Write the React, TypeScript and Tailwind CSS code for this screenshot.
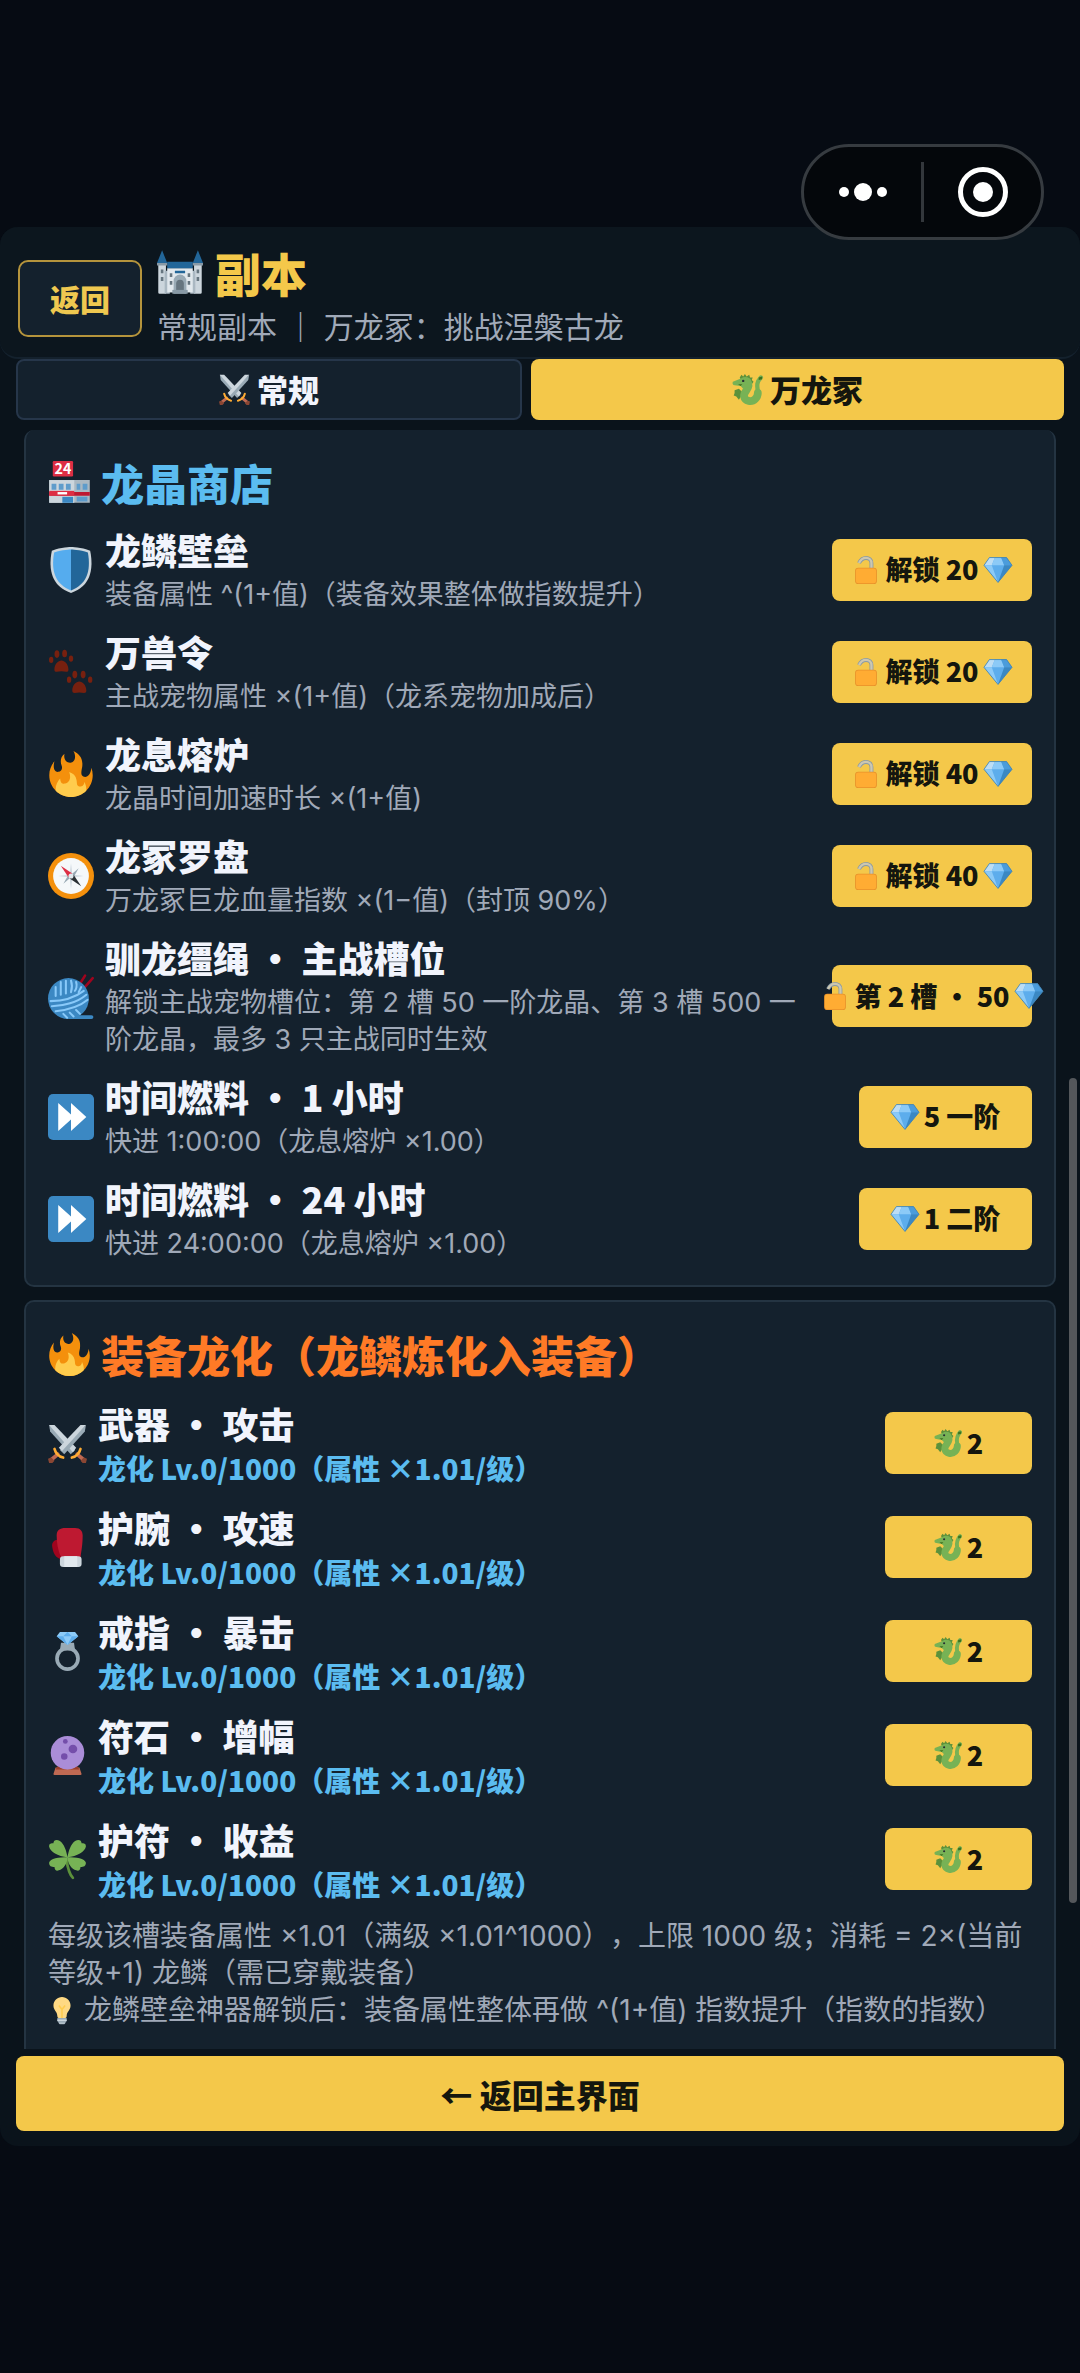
import type { ReactNode } from 'react';

/**
 * Dungeon screen, "万龙冢" tab: crystal shop on top, gear dragonization below.
 * To add a shop entry put it in SHOP_ITEMS; gear slots live in GEAR_SLOTS.
 */

const FONT = "font-['Noto_Sans_CJK_SC',sans-serif]";
// muted descriptions take their digits and signs from Inter
const MUTED = "font-['Inter','Noto_Sans_CJK_SC',sans-serif] text-[#a0a9b8]";

/* ---------- icons ---------- */

const ICONS = {
  castle: (
    <>
      <path fill="#CCD6DD" d="M1 12h6v23H2a1 1 0 0 1-1-1zM29 12h6v22a1 1 0 0 1-1 1h-5z" />
      <path fill="#AAB8C2" d="M6 17h4v18H6zM26 17h4v18h-4z" />
      <path fill="#E1E8ED" d="M8 15h20v19H8z" />
      <path fill="#269" d="M4 1L0 11h8zM32 1l-4 10h8zM8 10h20v5H8zM14 17h8v2h-8z" />
      <path fill="#8899A6" d="M0 11h8v2H0zM28 11h8v2h-8z" />
      <path fill="#66757F" d="M3 16h2v3H3zM3 22h2v3H3zM31 16h2v3h-2zM31 22h2v3h-2zM10 19h2v3h-2zM24 19h2v3h-2zM10 25h2v3h-2zM24 25h2v3h-2z" />
      <path fill="#99AAB5" d="M13 35V25a5 5 0 0 1 10 0v10z" />
      <path fill="#66757F" d="M15 35v-8a3 3 0 0 1 6 0v8z" />
      <path fill="#8899A6" d="M12 32h12v3H12z" />
    </>
  ),
  swords: (
    <>
      <path fill="#99AAB5" d="M1 1l5 1 19 22-4 4L2 7z" />
      <path fill="#CCD6DD" d="M1 1h5l20 21-3 4z" />
      <path fill="#99AAB5" d="M35 1l-1 6-19 21-4-4z" />
      <path fill="#CCD6DD" d="M35 1h-5L10 22l3 3z" />
      <path stroke="#BF6952" strokeWidth="3.500" strokeLinecap="round" d="M9 28l-6 5M27 28l6 5" />
      <path fill="none" stroke="#FFAC33" strokeWidth="2.400" strokeLinecap="round" d="M6 23c1 4 4 7 8 8M30 23c-1 4-4 7-8 8" />
      <path fill="#8A4633" d="M0 32l3-1 3 3-2 2H1zM36 32l-3-1-3 3 2 2h3z" />
    </>
  ),
  dragon: (
    <>
      <path fill="#5C913B" d="M9 4l2-3 2 2 2-3 2 3 3-2 1 3 3 0-1 3 2 2-2 3-12-4zM3 19l5-2 5 5-5 8-3-4-3-1 1-3z" />
      <path fill="none" stroke="#77B255" strokeWidth="5" strokeLinecap="round" d="M30 24c1-6-4-12 3.500-20" />
      <path
        fill="none"
        stroke="#77B255"
        strokeWidth="9"
        strokeLinecap="round"
        d="M18 9c5 7-5 11-4 17 1 6 9 7 13 3 2-2 3-4 3-7"
      />
      <path fill="#77B255" d="M22 8c-1-4-7-6-11-3L1 9c-1 2 0 4 2 4l7 1 3 3 8-2z" />
      <path fill="#3E721D" d="M31 4l4-1v3l-4 1zM7 12h5l-2 2z" />
      <circle cx="13" cy="8" r="1.4" fill="#292F33" />
    </>
  ),
  store: (
    <>
      <rect x="4" width="17" height="13" rx="1" fill="#DD2E44" />
      <text x="12.5" y="10.8" fontSize="12" fontWeight="700" textAnchor="middle" fill="#fff">24</text>
      <path fill="#AAB8C2" d="M1 16h34v19H1z" />
      <path fill="#CCD6DD" d="M1 16h21v19H1z" />
      <path fill="#BE1931" d="M1 26h34v3H1z" />
      <path fill="#DD2E44" d="M1 25h21v4H1z" />
      <path fill="#5E9CCB" d="M3 19h4v5H3zM9 19h4v5H9zM15 19h4v5h-4zM24 19h3v5h-3zM29 19h4v5h-4zM24 30h9v4h-9z" />
      <path fill="#3B88C3" d="M12 30h9v5h-9z" />
      <path fill="#fff" d="M8 26h8v2H8z" />
    </>
  ),
  shield: (
    <>
      <path fill="#CCD6DD" d="M33 3c-7-3-15-3-15-3S10 0 3 3C0 18 3 31 18 36c15-5 18-18 15-33z" />
      <path fill="#55ACEE" d="M18 34C6.400 29.700 2 19.800 4.800 4.400 11 2 18 2 18 2z" />
      <path fill="#269" d="M18 34c11.600-4.300 16-14.200 13.200-29.600C25 2 18 2 18 2z" />
    </>
  ),
  paws: (
    <g fill="#77200F">
      <path d="M5 16c0-4 3-7 5.500-7s5.500 3 5.500 7c0 3-3 1.500-5.500 1.500S5 19 5 16zM19 32.500c0-4 3-7 5.500-7s5.500 3 5.500 7c0 3-3 1.500-5.500 1.500s-5.500 1.500-5.500-1.500z" />
      <ellipse cx="2.500" cy="8.500" rx="1.700" ry="2.500" />
      <ellipse cx="7" cy="4" rx="1.900" ry="3" />
      <ellipse cx="13" cy="3.500" rx="1.900" ry="3" />
      <ellipse cx="18" cy="7.500" rx="1.700" ry="2.500" />
      <ellipse cx="16.500" cy="24" rx="1.700" ry="2.500" />
      <ellipse cx="21" cy="20" rx="1.900" ry="3" />
      <ellipse cx="27.500" cy="20" rx="1.900" ry="3" />
      <ellipse cx="33" cy="24" rx="1.700" ry="2.500" />
    </g>
  ),
  fire: (
    <>
      <path
        fill="#F4900C"
        d="M35 19c0-2.062-.367-4.039-1.040-5.868-.46 5.389-3.333 8.157-6.335 6.868-2.812-1.208-.917-5.917-.777-8.164.236-3.809-.012-8.169-6.931-11.794 2.875 5.500.333 8.917-2.333 9.125-2.958.231-5.667-2.542-4.667-7.042-3.238 2.386-3.332 6.402-2.333 9 1.042 2.708-.042 4.958-2.583 5.208-2.840.28-4.418-3.041-2.963-8.333C2.520 10.965 1 14.805 1 19c0 9.389 7.611 17 17 17s17-7.611 17-17z"
      />
      <path
        fill="#FFCC4D"
        d="M28.394 23.999c.148 3.084-2.561 4.293-4.019 3.709-2.106-.843-1.541-2.291-2.083-5.291s-2.625-5.083-5.708-6c2.250 6.333-1.247 8.667-3.080 9.084-1.872.426-3.753-.001-3.968-4.007C7.352 23.668 6 26.676 6 30c0 .368.023.73.055 1.090C9.125 34.124 13.342 36 18 36s8.875-1.876 11.945-4.910c.032-.36.055-.722.055-1.090 0-2.187-.584-4.236-1.606-6.001z"
      />
    </>
  ),
  compass: (
    <>
      <circle cx="18" cy="18" r="18" fill="#F4900C" />
      <circle cx="18" cy="18" r="14" fill="#F5F8FA" />
      <path fill="#CCD6DD" d="M18 8l1 9 9 1-9 1-1 9-1-9-9-1 9-1z" />
      <path fill="#99AAB5" d="M24 12l-4 7-2-2zM12 24l4-7 2 2z" />
      <path fill="#DD2E44" d="M10 10l9 6-3 3z" />
      <path fill="#292F33" d="M26 26l-9-6 3-3z" />
      <circle cx="18" cy="18" r="2" fill="#E1E8ED" />
    </>
  ),
  yarn: (
    <>
      <path stroke="#A0041E" strokeWidth="2" strokeLinecap="round" d="M24 10l5-8M28 12l7-8" />
      <circle cx="16" cy="20" r="16" fill="#3B88C3" />
      <path fill="none" stroke="#3B88C3" strokeWidth="3" strokeLinecap="round" d="M17 34.500h17" />
      <g fill="none" stroke="#88C9F9" strokeWidth="1.600" strokeLinecap="round">
        <path d="M6 11v7M10 7v10M14 6v10M18 6c1 3 1 6 0 9M22 7c1 3 0 6-1 7M26 11l-2 4" />
        <path d="M2 22c9 0 18-2 26-8M3 26c9 0 20-3 27-9M6 30c9-1 18-3 25-9" />
        <path d="M12 32l3 3M17 31l3 3M22 29l3 3" />
      </g>
    </>
  ),
  forward: (
    <>
      <rect width="36" height="36" rx="4" fill="#3B88C3" />
      <path fill="#fff" d="M8 7l10 9V7l12 11-12 11v-9L8 29z" />
    </>
  ),
  unlock: (
    <>
      <path fill="none" stroke="#8899A6" strokeWidth="5" d="M25 18V9c0-4-3-6.500-7-6.500S11 5 9 9" />
      <path fill="none" stroke="#CCC7B0" strokeWidth="3" d="M25 18V9c0-4-3-6.500-7-6.500S11 5 9 9" />
      <rect x="4" y="15" width="28" height="21" rx="4" fill="#E8912A" />
      <rect x="5" y="16" width="26" height="19" rx="3" fill="#FFAC33" />
    </>
  ),
  gem: (
    <>
      <path fill="#5DADEC" d="M7 2h22l7 10-18 22L0 12z" />
      <path fill="#BDDDF4" d="M7 2h7l-4 10H0z" />
      <path fill="#8CCAF7" d="M14 2h8l4 10H10z" />
      <path fill="#4B9CDB" d="M22 2h7l7 10H26z" />
      <path fill="#8CCAF7" d="M0 12h10l8 22z" />
      <path fill="#3B88C3" d="M36 12H26l-8 22z" />
      <path fill="none" stroke="#3F80AB" d="M7 2h22l7 10-18 22L0 12z" />
    </>
  ),
  glove: (
    <>
      <path fill="#A0041E" d="M11 11c-5-1-8 2-7 7 1 6 3 9 8 11z" />
      <path fill="#BE1931" d="M8 7c0-5 3-7 8-7h9c5 0 7 3 7 7 0 8-1 13-2 20H12C9 20 8 14 8 7z" />
      <rect x="11" y="26" width="20" height="10" rx="3" fill="#CCD6DD" />
      <rect x="15" y="26" width="12" height="10" fill="#E1E8ED" />
    </>
  ),
  ring: (
    <>
      <circle cx="18" cy="24.500" r="9.700" fill="none" stroke="#99AAB5" strokeWidth="3.400" />
      <path fill="#99AAB5" d="M12 10h12l1 7H11z" />
      <path fill="#8CCAF7" d="M11 0h14l3 4-10 8L8 4z" />
      <path fill="#5DADEC" d="M8 4h6l4 8zM14 4l4-4 4 4zM28 4h-6l-4 8z" />
    </>
  ),
  crystal: (
    <>
      <path fill="#BF6952" d="M7 29h22l2 6a1 1 0 0 1-1 1H6a1 1 0 0 1-1-1z" />
      <circle cx="18" cy="15.500" r="15.500" fill="#AA8DD8" />
      <path fill="#9B3D2A" d="M9 28c5 4 13 4 18 0l2 3H7z" />
      <g fill="#744EAA">
        <circle cx="23" cy="12" r="4" />
        <circle cx="15" cy="19" r="3" />
        <circle cx="16" cy="5" r="2.200" />
      </g>
    </>
  ),
  clover: (
    <>
      <path fill="none" stroke="#5C913B" strokeWidth="2.500" strokeLinecap="round" d="M17 18c1 7 2 13 6 17" />
      <path
        fill="#77B255"
        d="M18 16C9 15 2 11 1 6c0-3 2-3 4-3C5 0 8-1 11 1c4 3 6 9 7 15zM18 16c1-6 3-12 7-15 3-2 6-1 6 2 2 0 4 0 4 3-1 5-8 9-17 10zM18 16c0 6-4 11-8 12-2 1-4 0-4-3-3 0-5-1-5-4 1-4 9-5 17-5zM18 16c8 0 16 1 17 5 0 3-2 4-5 4 0 3-2 4-4 3-4-1-8-6-8-12z"
      />
    </>
  ),
  bulb: (
    <>
      <path fill="#FFD983" d="M29 11c0 6.500-5 7.500-5 13.500 0 3-3 3.400-6 3.400s-6-.4-6-3.400C12 18.500 7 17.500 7 11 7 5 12 .1 18 .1S29 5 29 11z" />
      <path fill="none" stroke="#FFCC4D" strokeWidth="2" d="M14 11l4 5 4-5M18 16v11" />
      <path fill="#99AAB5" d="M12 27h12v4l-3 4h-6l-3-4z" />
      <path fill="#CCD6DD" d="M12 29h12v2H12zM14 33h8v1h-8z" />
    </>
  ),
};

type IconName = keyof typeof ICONS;

function Icon({ name, className }: { name: IconName; className: string }) {
  return (
    <svg viewBox="0 0 36 36" aria-hidden="true" className={`shrink-0 overflow-visible ${className}`}>
      {ICONS[name]}
    </svg>
  );
}

/* ---------- data ---------- */

interface ShopItem {
  icon: IconName;
  name: string;
  desc: string;
  price: string;
  // locked entries show the padlock in front and the gem behind the price
  locked: boolean;
}

const SHOP_ITEMS: ShopItem[] = [
  { icon: 'shield',  name: '龙鳞壁垒', desc: '装备属性 ^(1+值)（装备效果整体做指数提升）', price: '解锁 20', locked: true },
  { icon: 'paws',    name: '万兽令', desc: '主战宠物属性 ×(1+值)（龙系宠物加成后）', price: '解锁 20', locked: true },
  { icon: 'fire',    name: '龙息熔炉', desc: '龙晶时间加速时长 ×(1+值)', price: '解锁 40', locked: true },
  { icon: 'compass', name: '龙冢罗盘', desc: '万龙冢巨龙血量指数 ×(1−值)（封顶 90%）', price: '解锁 40', locked: true },
  {
    icon: 'yarn',
    name: '驯龙缰绳 ・ 主战槽位',
    desc: '解锁主战宠物槽位：第 2 槽 50 一阶龙晶、第 3 槽 500 一阶龙晶，最多 3 只主战同时生效',
    price: '第 2 槽 ・ 50',
    locked: true,
  },
  { icon: 'forward', name: '时间燃料 ・ 1 小时', desc: '快进 1:00:00（龙息熔炉 ×1.00）', price: '5 一阶', locked: false },
  { icon: 'forward', name: '时间燃料 ・ 24 小时', desc: '快进 24:00:00（龙息熔炉 ×1.00）', price: '1 二阶', locked: false },
];

const GEAR_SLOTS: { icon: IconName; name: string }[] = [
  { icon: 'swords',  name: '武器 ・ 攻击' },
  { icon: 'glove',   name: '护腕 ・ 攻速' },
  { icon: 'ring',    name: '戒指 ・ 暴击' },
  { icon: 'crystal', name: '符石 ・ 增幅' },
  { icon: 'clover',  name: '护符 ・ 收益' },
];

/* ---------- pieces ---------- */

function PriceButton({ className, children }: { className: string; children: ReactNode }) {
  return (
    <button
      type="button"
      className={`flex h-[62px] shrink-0 items-center justify-center gap-[5px] rounded-lg
                  bg-[#f4c84a] text-[27px] font-black whitespace-nowrap text-[#14160e] ${className}`}
    >
      {children}
    </button>
  );
}

function ShopRow({ item }: { item: ShopItem }) {
  return (
    <li className="flex items-center gap-[11px]">
      <Icon name={item.icon} className="size-[46px]" />
      <div className="min-w-0 flex-1">
        <h3 className="text-[36px] leading-[47px] font-black text-[#f1f4fc]">{item.name}</h3>
        <p className={`mt-[3px] text-[27px] leading-[37px] ${MUTED}`}>{item.desc}</p>
      </div>
      {item.locked ? (
        <PriceButton className="ml-[5px] w-[200px]">
          <Icon name="unlock" className="size-[28px]" />
          <span>{item.price}</span>
          <Icon name="gem" className="size-[28px]" />
        </PriceButton>
      ) : (
        <PriceButton className="ml-[5px] w-[173px]">
          <Icon name="gem" className="size-[28px]" />
          <span>{item.price}</span>
        </PriceButton>
      )}
    </li>
  );
}

function GearRow({ icon, name }: { icon: IconName; name: string }) {
  return (
    <li className="flex items-center gap-[11px]">
      <Icon name={icon} className="size-[39px]" />
      <div className="min-w-0 flex-1 pt-[4px]">
        <h3 className="text-[36px] leading-[47px] font-black text-[#f1f4fc]">{name}</h3>
        <p className="text-[28px] leading-[43px] font-black text-[#5bbcf0]">
          龙化 Lv.0/1000（属性 ×1.01/级）
        </p>
      </div>
      <PriceButton className="w-[147px]">
        <Icon name="dragon" className="size-[28px]" />
        <span>2</span>
      </PriceButton>
    </li>
  );
}

/** Mini-program capsule in the top right corner, floats over the page. */
function Capsule() {
  return (
    <div className="absolute top-[144px] right-[36px] flex h-[96px] w-[243px] items-center
                    rounded-full border-[3px] border-[#363b40] bg-[#04070b]">
      <button type="button" aria-label="更多" className="flex flex-1 items-center justify-center gap-[5px]">
        <span className="size-[10px] rounded-full bg-white" />
        <span className="size-[18px] rounded-full bg-white" />
        <span className="size-[10px] rounded-full bg-white" />
      </button>
      <span className="h-[60px] w-[3px] bg-[#33373c]" />
      <button type="button" aria-label="关闭" className="flex flex-1 items-center justify-center">
        <span className="flex size-[50px] items-center justify-center rounded-full border-[5px] border-white">
          <span className="size-[20px] rounded-full bg-white" />
        </span>
      </button>
    </div>
  );
}

export default function App() {
  return (
    <div className={`relative min-h-screen bg-[#060b13] pt-[227px] [text-spacing-trim:space-all] ${FONT}`}>
      <div className="rounded-[18px] bg-[#0a131b] pb-[15px]">
        <header className="flex items-center gap-[15px] rounded-[18px] border-b-2 border-[#14212d] bg-[#0c161e]
                           px-[18px] pt-[18px] pb-[6px]">
          <button
            type="button"
            className="h-[77px] w-[124px] rounded-[10px] border-2 border-[#b5943c] bg-[#14212d]
                       text-[30px] font-black text-[#efc850]"
          >
            返回
          </button>
          <div>
            <h1 className="flex items-center gap-[12px] text-[46px] leading-[54px] font-black text-[#f4c84a]">
              <Icon name="castle" className="size-[46px]" />
              副本
            </h1>
            <p className={`mt-[4px] text-[30px] leading-[48px] ${MUTED}`}>常规副本 ｜ 万龙冢：挑战涅槃古龙</p>
          </div>
        </header>

        <nav className="flex gap-[9px] px-4 text-[31px] font-black">
          <button
            type="button"
            className="flex h-[61px] flex-auto items-center justify-center gap-[7px] rounded-lg
                       border-2 border-[#26364a] bg-[#14212d] text-[#f1f4fc]"
          >
            <Icon name="swords" className="size-[31px]" />
            常规
          </button>
          <button
            type="button"
            className="flex h-[61px] flex-auto items-center justify-center gap-[7px] rounded-lg
                       bg-[#f4c84a] text-[#14160e]"
          >
            <Icon name="dragon" className="size-[31px]" />
            万龙冢
          </button>
        </nav>

        <main className="relative mt-[10px] px-[24px]">
          <section className="rounded-[10px] border-2 border-t-0 border-[#243442] bg-[#14212d] px-[22px] pt-[20px] pb-[23px]">
            <h2 className="mb-[12px] flex items-center gap-[10px] text-[43px] leading-[64px] font-black text-[#5bbcf0]">
              <Icon name="store" className="size-[43px]" />
              龙晶商店
            </h2>
            <ul className="flex flex-col gap-[15px]">
              {SHOP_ITEMS.map((item) => (
                <ShopRow key={item.name} item={item} />
              ))}
            </ul>
          </section>

          <section className="mt-[13px] rounded-t-[10px] border-2 border-b-0 border-[#243442] bg-[#14212d] px-[22px] pt-[20px] pb-[20px]">
            <h2 className="mb-[10px] flex items-center gap-[10px] text-[43px] leading-[64px] font-black text-[#ff7a26]">
              <Icon name="fire" className="size-[43px]" />
              装备龙化（龙鳞炼化入装备）
            </h2>
            <ul className="flex flex-col gap-[10px]">
              {GEAR_SLOTS.map((slot) => (
                <GearRow key={slot.name} icon={slot.icon} name={slot.name} />
              ))}
            </ul>
            <p className={`mt-[12px] text-[28px] leading-[37px] ${MUTED}`}>
              每级该槽装备属性 ×1.01（满级 ×1.01^1000），上限 1000 级；消耗 = 2×(当前等级+1) 龙鳞（需已穿戴装备）
            </p>
            <p className={`flex items-center gap-[8px] text-[28px] leading-[37px] ${MUTED}`}>
              <Icon name="bulb" className="size-[28px]" />
              龙鳞壁垒神器解锁后：装备属性整体再做 ^(1+值) 指数提升（指数的指数）
            </p>
          </section>

          <div className="absolute top-[40%] right-[3px] h-[51%] w-[8px] rounded-full bg-[#54575b]" />
        </main>

        <footer className="mt-[7px] px-4">
          <button
            type="button"
            className="h-[75px] w-full rounded-lg bg-[#f4c84a] text-[32px] font-black text-[#14160e]"
          >
            ← 返回主界面
          </button>
        </footer>
      </div>

      <Capsule />
    </div>
  );
}
